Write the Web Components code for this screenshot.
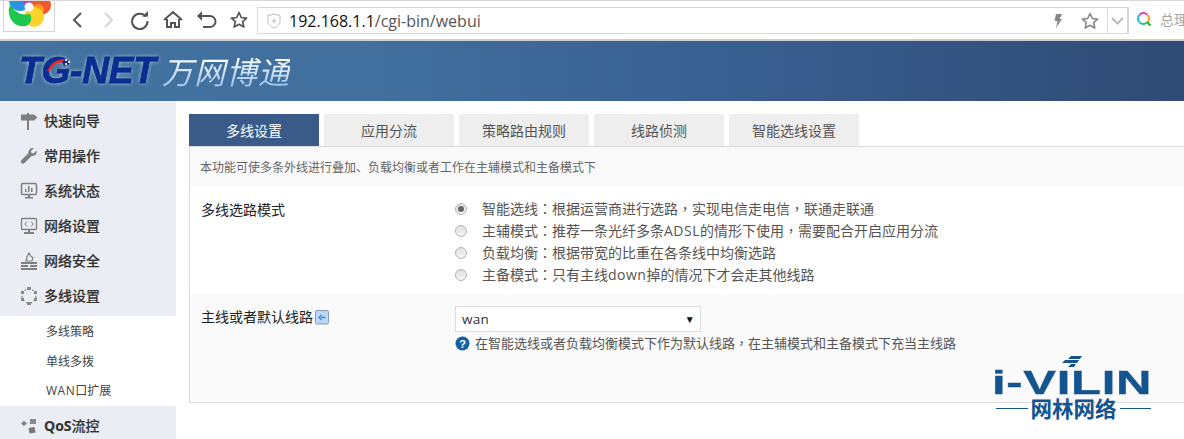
<!DOCTYPE html>
<html lang="zh"><head><meta charset="utf-8"><title>TG-NET</title>
<style>
html,body{margin:0;padding:0;height:439px;overflow:hidden;background:#fff;font-family:"Noto Sans CJK SC","Liberation Sans",sans-serif;}
.p{font-family:"Noto Sans CJK TC",sans-serif}
.w{letter-spacing:.5px}
</style></head><body>
<browser-bar></browser-bar>
<app-header></app-header>
<app-body>
  <side-nav slot="nav">
    <nav-item icon="sign">快速向导</nav-item>
    <nav-item icon="wrench">常用操作</nav-item>
    <nav-item icon="chart">系统状态</nav-item>
    <nav-item icon="code">网络设置</nav-item>
    <nav-item icon="fire">网络安全</nav-item>
    <nav-item icon="ring" class="last">多线设置</nav-item>
    <sub-menu>
      <sub-item>多线策略</sub-item>
      <sub-item>单线多拨</sub-item>
      <sub-item><span class="w">WAN</span>口扩展</sub-item>
    </sub-menu>
    <nav-item icon="cubes" class="first"><b>QoS</b>流控</nav-item>
  </side-nav>
  <tab-bar>
    <tab-item active>多线设置</tab-item>
    <tab-item>应用分流</tab-item>
    <tab-item>策略路由规则</tab-item>
    <tab-item>线路侦测</tab-item>
    <tab-item>智能选线设置</tab-item>
  </tab-bar>
  <config-panel>
    <info-strip>本功能可使多条外线进行叠加、负载均衡或者工作在主辅模式和主备模式下</info-strip>
    <form-row label="多线选路模式">
      <radio-opt checked>智能选线<span class="p" lang="zh-TW">：</span>根据运营商进行选路<span class="p" lang="zh-TW">，</span>实现电信走电信<span class="p" lang="zh-TW">，</span>联通走联通</radio-opt>
      <radio-opt>主辅模式<span class="p" lang="zh-TW">：</span>推荐一条光纤多条<span class="w">ADSL</span>的情形下使用<span class="p" lang="zh-TW">，</span>需要配合开启应用分流</radio-opt>
      <radio-opt>负载均衡<span class="p" lang="zh-TW">：</span>根据带宽的比重在各条线中均衡选路</radio-opt>
      <radio-opt>主备模式<span class="p" lang="zh-TW">：</span>只有主线<span class="w">down</span>掉的情况下才会走其他线路</radio-opt>
    </form-row>
    <form-row label="主线或者默认线路" alt back>
      <fake-select>wan</fake-select>
      <help-note>在智能选线或者负载均衡模式下作为默认线路<span class="p" lang="zh-TW">，</span>在主辅模式和主备模式下充当主线路</help-note>
    </form-row>
    <watermark-logo></watermark-logo>
  </config-panel>
</app-body>
<script>
function def(name, html, extra){
  customElements.define(name, class extends HTMLElement{
    constructor(){super();this.attachShadow({mode:'open'}).innerHTML=html;}
    connectedCallback(){ if(extra) extra.call(this,this.shadowRoot); }
  });
}
const latin='"Open Sans","Noto Sans CJK SC",sans-serif';
def('browser-bar',`<style>
:host{display:flex;align-items:center;border-top:1px solid #d8d8d8;border-bottom:2px solid #cfcfcf;box-sizing:border-box;height:41px;background:#fff;position:relative;overflow:hidden;font-family:"Open Sans","Liberation Sans",Arial,sans-serif}
.tile{width:52px;height:32px;box-sizing:border-box;margin:-1px 0 0 3px;background:#fff;border:1px solid #d4d4d4;border-top:0;overflow:hidden;flex:none;align-self:flex-start}
.tile svg{display:block}
.nav{display:flex;align-items:center}
.nav svg{display:block;flex:none}
.addr{position:absolute;left:257px;right:76px;top:6px;height:27px;box-sizing:border-box;border:1px solid #d9d9d9;display:flex;align-items:center;font-size:16px;color:#555}
.addr b{font-weight:400;color:#111}
.addr .url{margin-left:8px}
.shield{margin-left:9px}
.r{margin-left:auto;display:flex;align-items:center}
.drop{position:absolute;left:1107px;top:6px;width:22px;height:27px;box-sizing:border-box;border:1px solid #d9d9d9;border-left:0;border-right:2px solid #d9d9d9;display:flex;align-items:center;justify-content:center}
.search{position:absolute;left:1136px;top:8px;display:flex;align-items:center;color:#a5a5a5;font-size:14px;font-family:"Noto Sans CJK SC",sans-serif;white-space:nowrap}
</style>
<div class="tile"><svg width="50" height="31" viewBox="4 0 50 31">
<circle cx="20" cy="0" r="11" fill="#2a93e6"/><circle cx="31" cy="-3" r="10" fill="#c43bd0"/>
<circle cx="41" cy="5" r="10" fill="#f3562b"/><circle cx="38" cy="10" r="6" fill="#f89a24"/>
<circle cx="34" cy="17" r="10" fill="#fbd32a"/>
<path d="M30 14a8 8 0 0 1-4 12A14 14 0 0 1 9 13 11 11 0 0 1 11 4c2 7 9 12 19 10z" fill="#1fc64e"/>
<circle cx="29" cy="7" r="4.500" fill="#fff"/></svg></div>
<div class="nav" style="margin-left:9px">
<svg width="30" height="30" viewBox="0 0 30 30" style="margin-left:-1px"><path d="M18 8l-7 7 7 7" fill="none" stroke="#555" stroke-width="2"/></svg>
<svg width="30" height="30" viewBox="0 0 30 30"><path d="M12 8l7 7-7 7" fill="none" stroke="#d4d4d4" stroke-width="2"/></svg>
<svg width="34" height="30" viewBox="0 0 34 30"><path d="M22.800 11.500A7.700 7.700 0 1 0 24.500 16" fill="none" stroke="#555" stroke-width="2"/><path d="M19 11.500h6V6z" fill="#555"/></svg>
<svg width="32" height="30" viewBox="0 0 32 30"><path d="M7 15l9-8 9 8M10 14v8h4v-4h4v4h4v-8" fill="none" stroke="#555" stroke-width="2"/></svg>
<svg width="33" height="30" viewBox="0 0 33 30" style="margin-left:1px"><path d="M11 11h9a5 5 0 0 1 0 11h-7" fill="none" stroke="#555" stroke-width="2"/><path d="M12 6v10l-5-5z" fill="#555"/></svg>
<svg width="32" height="30" viewBox="0 0 32 30"><path d="M16 7.500l2.300 5 5.300.6-3.900 3.600 1.100 5.300-4.800-2.700-4.800 2.700 1.100-5.300-3.900-3.600 5.300-.6z" fill="none" stroke="#555" stroke-width="1.700" stroke-linejoin="round"/></svg>
</div>
<div class="addr">
<svg class="shield" width="14" height="16" viewBox="0 0 14 16"><path d="M1 2.500l6-1.500 6 1.500v6c0 3-3 5-6 6.500-3-1.500-6-3.500-6-6.500z" fill="#fff" stroke="#bcbcbc"/><path d="M7 5.500v5M4.500 8h5" stroke="#bcbcbc"/></svg>
<span class="url"><b>192.168.1.1</b>/cgi-bin/webui</span>
<span class="r">
<svg width="10" height="14" viewBox="0 0 10 14" style="margin-right:18px"><path d="M3 0h6L6.500 5H9L3 14l1.500-7H1.500z" fill="#888"/></svg>
<svg width="18" height="17" viewBox="0 0 18 17" style="margin-right:8px"><path d="M9 1.500l2.300 5 5.300.6-3.900 3.600 1.100 5.300L9 13.300 4.200 16l1.100-5.300L1.400 7.100l5.300-.6z" fill="none" stroke="#8a8a8a" stroke-width="1.600" stroke-linejoin="round"/></svg>
</span>
</div>
<div class="drop"><svg width="13" height="8" viewBox="0 0 13 8"><path d="M1 1l5.500 5.500L12 1" fill="none" stroke="#b5bcc0" stroke-width="2"/></svg></div>
<div class="search">
<svg width="16" height="16" viewBox="0 0 16 16"><path d="M3.600 3.600A5.500 5.500 0 0 1 11.400 3.600" fill="none" stroke="#e23bc0" stroke-width="2"/><path d="M3.600 11.400A5.500 5.500 0 0 1 3.600 3.600" fill="none" stroke="#25b7ee" stroke-width="2"/><path d="M11.400 3.600A5.500 5.500 0 0 1 11.400 11.400" fill="none" stroke="#f3a21c" stroke-width="2"/><path d="M3.600 11.400A5.500 5.500 0 0 0 11 11.500" fill="none" stroke="#25c7a0" stroke-width="2"/><path d="M11 11l3.500 3.500" stroke="#34b233" stroke-width="2.200"/></svg>
<span style="margin-left:8px">总理</span></div>`);

def('app-header',`<style>
:host{display:flex;align-items:center;height:60px;background:linear-gradient(90deg,#42729f 0,#41709f 30%,#3a6093 60%,#2f4a74 100%);overflow:hidden;position:relative}
.tg{font:italic 700 36px/60px "Liberation Sans",Arial,sans-serif;color:#0a2d92;margin-left:19px;letter-spacing:-.2px;-webkit-text-stroke:.8px #0a2d92;text-shadow:0 0 4px rgba(235,245,235,.8);white-space:nowrap;width:135px;display:inline-block;transform:scaleX(1.03);transform-origin:left}
.sw{position:absolute;left:47px;top:17px}
.cn{margin-left:8px;font:italic 400 31px/60px "Noto Sans CJK SC",sans-serif;letter-spacing:1px;white-space:nowrap;background:linear-gradient(180deg,#fff 30%,#9cc3ea 75%);-webkit-background-clip:text;background-clip:text;-webkit-text-fill-color:transparent}
</style><span class="tg">TG-NET</span><svg class="sw" width="24" height="14" viewBox="0 0 24 14"><path d="M0 13C4 5 10 1 18 1l-3 3.500C9 4.500 5 8 3 13z" fill="#e8272a"/><path d="M18 1h2v2h-2zM21 3h2v2h-2zM18 5h2v2h-2z" fill="#f3d9d9"/></svg><span class="cn">万网博通</span>`);

def('app-body',`<style>
:host{display:flex;align-items:flex-start}
.nav{flex:none;width:176px}
main{flex:1;min-width:0;padding:13px 0 0 13px}
</style><div class="nav"><slot name="nav"></slot></div><main><slot></slot></main>`);

def('side-nav',`<style>:host{display:block;background:#eaedf3;padding-top:1px}</style><slot></slot>`);

const icons={
 sign:`<path d="M1 2.500h6V1h2v1.500h5l3.500 3-3.500 3H9V18H7V8.500H1z" fill="#7f7f7f"/>`,
 wrench:`<path d="M16.500 3.500l-3 3-2-.5-.5-2 3-3C11 .5 8.200 2.500 8.500 6L1.500 13a2.100 2.100 0 0 0 3 3l7-7c3.500.5 5.800-2.300 5-5.500z" fill="#7f7f7f"/>`,
 chart:`<rect x="1.500" y="1.500" width="15" height="11" rx="1.500" fill="none" stroke="#7f7f7f" stroke-width="1.500"/><path d="M5 10V7h1.500v3zM8 10V4h1.500v6zM11 10V6h1.500v4zM8 13h2v2h3v1.500H5V15h3z" fill="#7f7f7f"/>`,
 code:`<rect x="1.500" y="1.500" width="15" height="11" rx="1" fill="none" stroke="#7f7f7f" stroke-width="1.300"/><path d="M7 4.500L4.800 7 7 9.500M11 4.500L13.200 7 11 9.500" fill="none" stroke="#7f7f7f"/><path d="M8 13h2v2h4v2H4v-2h4z" fill="#7f7f7f"/>`,
 fire:`<path d="M9 1l2 3.500 2 1-1 3.500H6L7 5z" fill="none" stroke="#7f7f7f" stroke-width="1.200"/><path d="M1 10h16v2H1zM1 13h7v2H1zM10 13h7v2h-7zM1 16h16v2H1z" fill="#7f7f7f"/>`,
 ring:`<circle cx="9" cy="9" r="7" fill="none" stroke="#8a8a8a" stroke-width="1.200" stroke-dasharray="2 2"/><path d="M7 0h4v3H7zM7 15h4v3H7zM1 4h3v3H1zM14 4h3v3h-3zM1 11h3v3H1zM14 11h3v3h-3z" fill="#8a8a8a"/>`,
 cubes:`<path d="M4 4l3 2.500L4 9 1 6.500z" fill="#808080"/><path d="M10 2h6v5h-6z" fill="#8a8a8a"/><path d="M8.500 11l6-1 1 5.500-6 1z" fill="#777"/>`
};
def('nav-item',`<style>
:host{display:flex;align-items:center;height:35px;box-sizing:border-box;font-size:14px;font-weight:500;color:#333;white-space:nowrap;padding-left:20px;-webkit-text-stroke:.15px #333;font-family:${latin}}
:host(.last){height:39px;padding-bottom:4px}
:host(.first){padding-top:2px}
svg{width:18px;height:18px;flex:none;margin:2px 6px 0 0}
</style><svg viewBox="0 0 18 18"></svg><span><slot></slot></span>`,function(r){r.querySelector('svg').innerHTML=icons[this.getAttribute('icon')]||''});

def('sub-menu',`<style>:host{display:block;background:#fff;padding-top:2px;height:90px;box-sizing:border-box}</style><slot></slot>`);
def('sub-item',`<style>:host{display:flex;align-items:center;height:29.4px;box-sizing:border-box;padding:0 0 3px 46px;font:12px ${latin};color:#444}</style><span><slot></slot></span>`);

def('tab-bar',`<style>:host{display:flex;gap:5px;height:32px}</style><slot></slot>`);
def('tab-item',`<style>
:host{display:flex;align-items:center;justify-content:center;width:130px;background:#eee;color:#555;font-size:14px}
:host([active]){background:#3a5b8a;color:#fff}
</style><slot></slot>`);

def('config-panel',`<style>
:host{display:block;position:relative;box-sizing:border-box;height:257px;border:1px solid #ddd;border-width:1px 0 1px 1px;background:#fff}
</style><slot></slot>`);
def('info-strip',`<style>:host{display:flex;align-items:center;box-sizing:border-box;height:40px;padding:0 0 2px 10px;background:#f9f9f9;font-size:12px;color:#666;white-space:nowrap}</style><slot></slot>`);

def('form-row',`<style>
:host{display:grid;grid-template-columns:254px 1fr;height:108px;box-sizing:border-box;padding:11px 0 0 11px;background:#fff}
:host([alt]){background:#fafafa;height:107px}
.l{font-size:14px;color:#222;line-height:22px;display:flex;align-items:flex-start;white-space:nowrap}
:host([alt]) .l{line-height:20px}
svg{display:none;margin:4px 0 0 2px;flex:none}
:host([back]) svg{display:block}
</style><div class="l"><span class="t"></span><svg width="15" height="15" viewBox="0 0 15 15"><rect x=".5" y=".5" width="13" height="13.500" rx="1.500" fill="#bcd7f5" stroke="#7f9dbd"/><path d="M10.500 7.500H6M6.500 5L4 7.500 6.500 10" fill="none" stroke="#3f83d6" stroke-width="1.300"/></svg></div><div class="v"><slot></slot></div>`,function(r){r.querySelector('.t').textContent=this.getAttribute('label')});

def('radio-opt',`<style>
:host{display:flex;align-items:center;height:22px;font:14px ${latin};color:#555;white-space:nowrap}
i{width:12px;height:12px;box-sizing:border-box;border-radius:50%;border:1px solid #b4b4b4;background:linear-gradient(#e0e0e0,#f4f4f4);margin-right:15px;display:flex;align-items:center;justify-content:center;flex:none}
:host([checked]) i::after{content:"";width:6px;height:6px;border-radius:50%;background:#666}
span{padding-bottom:3px}
</style><i></i><span><slot></slot></span>`);

def('fake-select',`<style>
:host{display:flex;align-items:center;justify-content:space-between;width:246px;height:26px;box-sizing:border-box;border:1px solid #ddd;background:#fff;padding:0 5px 0 6px;font:13.5px "Open Sans","Liberation Sans",sans-serif;color:#333;letter-spacing:.3px}
span{font-size:10px;color:#111}
</style><slot></slot><span>▼</span>`);

def('help-note',`<style>
:host{display:flex;align-items:center;height:22px;font-size:13px;color:#555;white-space:nowrap}
svg{margin:0 5px 0 0;flex:none}
span{padding-bottom:2px}
</style><svg width="15" height="15" viewBox="0 0 15 15"><circle cx="7.500" cy="7.500" r="7" fill="#17609f"/><text x="7.500" y="11.500" text-anchor="middle" font-family="Liberation Sans" font-weight="700" font-size="11" fill="#fff">?</text></svg><span><slot></slot></span>`);

def('watermark-logo',`<style>
:host{position:absolute;left:805px;top:205px;width:160px;height:70px;display:block;color:#13548f;z-index:2}
.stripes{position:absolute;left:63px;top:3px}
.main{position:absolute;left:-3px;top:18px;font:700 34px/24px "Liberation Sans",Arial,sans-serif;letter-spacing:.5px;white-space:nowrap;transform:scaleX(1.44);transform-origin:left;color:#13548f;-webkit-text-stroke:.4px #13548f}
.sub{position:absolute;left:1px;top:45px;width:155px;display:flex;align-items:center;gap:3px;font-size:21.5px;line-height:22px;font-weight:700;white-space:nowrap}
.sub i{flex:1;height:1px;background:#13548f}
</style>
<svg class="stripes" width="26" height="14" viewBox="0 0 26 14"><path d="M10 4l3-3h11l-2 3zM4 8l3-3h14l-2 3zM10 12l3-3h5l-2 3z" fill="#13548f"/></svg>
<div class="main">i-VILIN</div>
<div class="sub"><i></i><span>网林网络</span><i></i></div>`);
</script>
</body></html>
